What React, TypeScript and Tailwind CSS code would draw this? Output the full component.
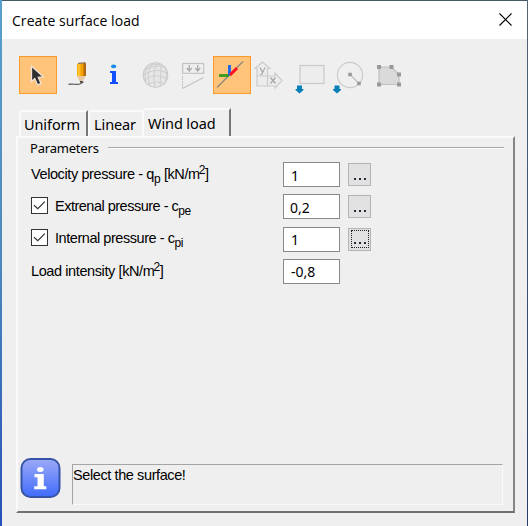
import type { ReactNode } from "react";

const ui = "font-['Open_Sans','Noto_Sans',sans-serif]";
const arial = "font-['Liberation_Sans',Arial,sans-serif]";
const tahoma = "font-['Noto_Sans','DejaVu_Sans',sans-serif]";

function Tool({ x, w, active = false, children }: { x: number; w: number; active?: boolean; children: ReactNode }) {
  return (
    <button
      className={active ? "h-[38px] shrink-0 bg-[#ffc379] outline-1 -outline-offset-1 outline-[#fc9a2c]" : "h-[38px] shrink-0"}
      style={{ width: w }}
    >
      <svg width={w} height={38} viewBox={`${x} 56 ${w} 38`} fill="none" className="block">
        {children}
      </svg>
    </button>
  );
}

function Toolbar() {
  return (
    <div className="flex h-[69px] shrink-0 pt-[17px] pl-[17px]">
      <Tool x={19} w={38} active>
        <path d="M31.5 66v15.5l3.3-3 2.8 6.4 3.4-1.5-2.7-6 4.9-.6z" fill="#303030" stroke="#eee5da" strokeWidth="1.3" />
      </Tool>
      <Tool x={57} w={40}>
        <path d="M68.5 84.3c5-1 8 1.2 12-.5l3-2" stroke="#555" strokeWidth="1.2" />
        <path d="M77 76l3.8 8 4.9-8z" fill="#e8c8a0" />
        <path d="M80 81l.8 3 2-3z" fill="#333" />
        <path d="M77 64l9-1v13h-9z" fill="#f4a000" />
        <path d="M77.5 64h3v12h-3z" fill="#ffc22c" />
        <path d="M83.5 63.3h2.5V76h-2.5z" fill="#ac6b12" />
        <path d="M78 63.4l7.5-.6" stroke="#70553d" />
      </Tool>
      <Tool x={97} w={38}>
        <ellipse cx="113.6" cy="66.3" rx="2.6" ry="1.9" fill="#168bf0" />
        <path d="M110 71h6v11h2v2h-8v-2h2v-9h-2z" fill="#124fff" />
      </Tool>
      <Tool x={135} w={39}>
        <circle cx="155.5" cy="75" r="12.4" fill="#e6e6e6" stroke="#cacaca" />
        <g stroke="#c8c8c8" strokeWidth=".8">
          <path d="M144.5 70q10-6 21-3M143.3 75q12-8 24-2M144 80q12-8 23.5-1M147 85q9-6 18-.5M148 65.5q6-2 12-1" />
          <path d="M153 63q-8 10-3 23M157 62.8q-5 12-2 24.5M161 64q0 12-1 22.6M165 67q3 9-.5 17M148 65.5q-5 8-2 17.5" />
        </g>
      </Tool>
      <Tool x={174} w={39}>
        <rect x="182.7" y="63.5" width="21" height="9.8" stroke="#c2c2c2" strokeWidth="1.2" />
        <path d="M189.3 65v6m-2.5-3 2.5 3 2.5-3M197.7 65v6m-2.5-3 2.5 3 2.5-3" stroke="#aaa" strokeWidth="1.3" />
        <path d="M182.5 76v12" stroke="#bababa" strokeDasharray="1.5 1" />
        <path d="M182.5 88.5l21-11" stroke="#c4c4c4" strokeWidth="1.4" />
      </Tool>
      <Tool x={213} w={38} active>
        <path d="M217 87.5l26-26" stroke="#8b8681" strokeWidth="1.3" />
        <path d="M219 75.5h10" stroke="#369b17" strokeWidth="2.8" />
        <path d="M229.5 65v10.5" stroke="#1765ef" strokeWidth="2.8" />
        <path d="M230 75l7-7" stroke="#ff1020" strokeWidth="3" />
      </Tool>
      <Tool x={251} w={39}>
        <path d="M257 76v-7.5h-2l7.5-6.5 7.5 6.5h-2.5V76zM257 76h10.5v10H257zM267.5 76h7.5v-3l7 7.5-7 7.5v-2h-7.5z" fill="#ececec" stroke="#cbcbcb" strokeWidth="1.2" />
        <path d="M260 67.5l2.5 5m2.5-5-3.3 7h-1.5M270.5 77.5l5 6m0-6-5 6" stroke="#a5a5a5" strokeWidth="1.2" />
      </Tool>
      <Tool x={290} w={40}>
        <rect x="300" y="65.5" width="24" height="18" fill="#ededed" stroke="#c9c9c9" strokeWidth="1.2" />
        <path d="M297 85.5h5v3.5h1.5v1l-4 3.5-4-3.5v-1h1.5z" fill="#087fb7" />
      </Tool>
      <Tool x={330} w={40}>
        <circle cx="350" cy="75" r="12.6" stroke="#cbcbcb" strokeWidth="1.2" />
        <path d="M350 74.5l9 9" stroke="#999" />
        <path d="M348.2 72.7h3.6v3.6h-3.6zM357.2 81.7h3.6v3.6h-3.6z" fill="#999" />
        <path d="M334.5 85.5h5v3.5h1.5v1l-4 3.5-4-3.5v-1h1.5z" fill="#087fb7" />
      </Tool>
      <Tool x={370} w={38}>
        <path d="M379 67h12.5l7.5 7.5V84.5h-20z" fill="#dadada" stroke="#c0c0c0" strokeWidth="1.2" />
        <path d="M377 65h4v4h-4zM389.5 65h4v4h-4zM397 72.5h4v4h-4zM397 82.5h4v4h-4zM377 82.5h4v4h-4z" fill="#999" />
      </Tool>
    </div>
  );
}

function Check() {
  return (
    <span className="mr-[7px] mb-[3px] flex h-[17px] w-[17px] items-center justify-center border border-[#333] bg-white">
      <svg width="15" height="15" viewBox="0 0 15 15" fill="none">
        <path d="M2 7.3l3.8 3.4 7-7" stroke="#333" strokeWidth="1.2" />
      </svg>
    </span>
  );
}

function Row({ label, value, checked = false, more = false, focused = false, inset = "pl-[7px]" }: {
  label: ReactNode; value: string; checked?: boolean; more?: boolean; focused?: boolean; inset?: string;
}) {
  return (
    <div className="flex h-[32.3px] items-start">
      <div className="flex h-[25px] w-[252px] items-center whitespace-nowrap">
        {checked && <Check />}
        {label}
      </div>
      <div className={`${tahoma} flex h-[25px] w-[57px] items-center border border-[#898989] bg-white pt-px text-[14px] tracking-normal ${inset}`}>{value}</div>
      {more && (
        <button className="mt-px ml-[8px] flex h-[23px] w-[23px] items-center justify-center border border-[#b4b4b4] bg-[#e1e1e1]">
          <span className={focused ? "flex h-[18px] w-[18px] items-end justify-center border border-dotted border-[#222] pb-[3px]" : "flex h-[18px] w-[18px] items-end justify-center pb-1"}>
            <svg width="14" height="2" viewBox="0 0 14 2"><path d="M1 0h2v2H1zM6 0h2v2H6zM11 0h2v2h-2z" fill="#28283c" /></svg>
          </span>
        </button>
      )}
    </div>
  );
}

const sub = "relative top-[4px] text-[12px]";
const sup = "relative -top-[5px] -ml-px text-[12px]";

export default function App() {
  return (
    <div className="flex h-[526px] w-[528px] overflow-hidden bg-[#efefef] text-black">
      <div className="w-[2px] shrink-0 bg-linear-to-b from-[#57a0cc] via-[#4e87bd] to-[#2750b8]" />
      <div className="flex min-w-0 flex-1 flex-col border-t border-[#435b68]">
        <header className="flex h-[38px] shrink-0 items-center justify-between bg-white pr-[15px] pb-px pl-[10px]">
          <h1 className={`${ui} pt-px text-[14px] tracking-[0.05px]`}>Create surface load</h1>
          <svg width="13" height="13" viewBox="0 0 13 13"><path d="M.5.5l12 12m0-12l-12 12" stroke="#000" strokeWidth="1.1" /></svg>
        </header>
        <Toolbar />
        <div className={`${tahoma} flex h-[29px] shrink-0 items-end pl-[17px] text-[14.5px] tracking-[-0.1px] whitespace-nowrap`}>
          <div className="flex h-[27px] w-[69px] items-center rounded-tl-sm border-t-2 border-r-2 border-l-2 border-t-[#fafafa] border-r-[#777] border-l-[#fafafa] pl-[3px]">Uniform</div>
          <div className="flex h-[27px] w-[54px] items-center rounded-tl-sm border-t-2 border-l-2 border-[#fafafa] pl-[4px]">Linear</div>
          <div className="flex h-[29px] w-[89px] items-center rounded-tl-sm border-t-2 border-r-2 border-l-2 border-t-[#fafafa] border-r-[#777] border-l-[#fafafa] pt-[1px] pl-[4px]">Wind load</div>
        </div>
        <main className={`${arial} -mt-px ml-[14px] flex h-[377px] w-[499px] flex-col border-2 border-t-[#fafafa] border-r-[#858585] border-b-[#707070] border-l-[#fafafa] text-[14.5px] tracking-[-0.4px]`}>
          <div className="flex h-[24px] shrink-0 items-start gap-[9px] pr-[9px] pl-[12px]">
            <span className={`${tahoma} text-[13px] leading-[20px] tracking-[-0.2px]`}>Parameters</span>
            <span className="mt-[9px] h-[2px] flex-1 border-t border-b border-t-[#a9a9a9] border-b-[#fafafa]" />
          </div>
          <div className="flex h-[296px] shrink-0 flex-col pl-[13px]">
            <Row label={<span>Velocity pressure - q<span className={sub}>p</span> [kN/m<span className={sup}>2</span>]</span>} value="1" more />
            <Row checked label={<span className="tracking-[-0.5px]">Extrenal pressure - c<span className={sub}>pe</span></span>} value="0,2" more inset="pl-[6px]" />
            <Row checked label={<span className="tracking-[-0.45px]">Internal pressure - c<span className={sub}>pi</span></span>} value="1" more focused />
            <Row label={<span>Load intensity [kN/m<span className={sup}>2</span>]</span>} value="-0,8" />
          </div>
          <footer className="flex pl-[2px]">
            <svg width="41" height="42" viewBox="0 0 41 42" className="shrink-0">
              <defs><linearGradient id="info" x2="0" y2="1"><stop stopColor="#9ba9f7" /><stop offset="1" stopColor="#406cfb" /></linearGradient></defs>
              <rect x="1.5" y="1" width="38" height="38" rx="9" fill="url(#info)" stroke="#3654a5" strokeWidth="2" />
              <ellipse cx="20.3" cy="11.5" rx="3.3" ry="2.5" fill="#fff" />
              <path d="M14.5 16h9.3v12.2h2.5v3H14.2v-3h3.3v-9h-3z" fill="#fff" />
            </svg>
            <div className="mt-[6px] ml-[11px] h-[41px] w-[431px] border border-t-[#a5a5a5] border-r-[#fafafa] border-b-[#fafafa] border-l-[#a5a5a5] leading-[20px]">Select the surface!</div>
          </footer>
        </main>
      </div>
      <div className="w-px shrink-0 bg-linear-to-b from-[#526674] to-[#263b6b]" />
    </div>
  );
}
